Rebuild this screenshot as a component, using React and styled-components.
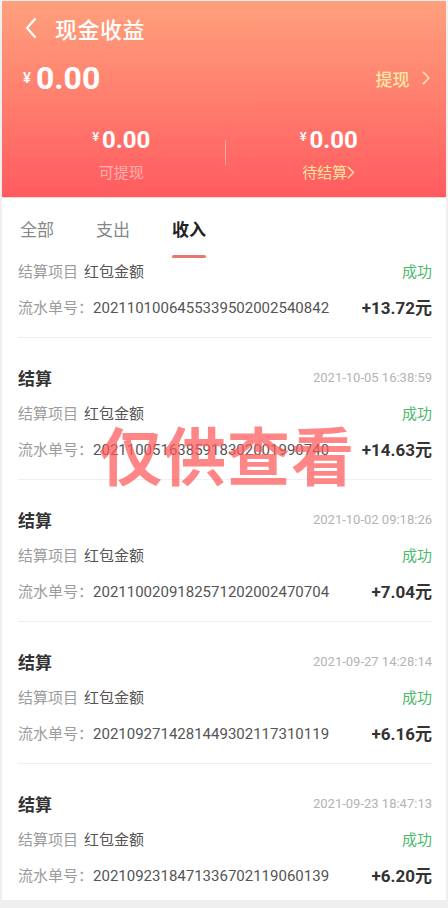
import React from "react";
import styled, { createGlobalStyle } from "styled-components";

const GlobalStyle = createGlobalStyle`
  html, body {
    margin: 0;
    padding: 0;
    background: #efefef;
  }
  * { box-sizing: border-box; }
`;

const NUM = `Roboto, "Noto Sans CJK SC", sans-serif`;
const CJK = `"Noto Sans CJK SC", "Noto Sans", sans-serif`;

const records = [
  { date: "2021-10-10 06:45:53", serial: "2021101006455339502002540842", amount: "+13.72" },
  { date: "2021-10-05 16:38:59", serial: "2021100516385918302001990740", amount: "+14.63" },
  { date: "2021-10-02 09:18:26", serial: "2021100209182571202002470704", amount: "+7.04" },
  { date: "2021-09-27 14:28:14", serial: "2021092714281449302117310119", amount: "+6.16" },
  { date: "2021-09-23 18:47:13", serial: "2021092318471336702119060139", amount: "+6.20" },
];

// the list is scrolled: only the lower part of the first record shows
const scrollTop = 8;

const Frame = styled.div`
  width: 448px;
  height: 908px;
  padding: 1px 2px 0 2px;
  background: #efefef;
  font-family: ${CJK};
`;

const Screen = styled.div`
  height: 899px;
  background: #fff;
  display: flex;
  flex-direction: column;
  overflow: hidden;
`;

const Header = styled.header`
  height: 197px;
  flex-shrink: 0;
  background: linear-gradient(180deg, #ffa07c 0%, #ff7e6e 50%, #ff5b60 100%);
  color: #fff;
  display: flex;
  flex-direction: column;
  border-bottom: 1px solid #f3d6d6;
`;

const TopBar = styled.div`
  height: 54px;
  display: flex;
  align-items: center;
  padding-left: 22px;
`;

const Title = styled.h1`
  margin: 0 0 0 17px;
  font-size: 22px;
  font-weight: 500;
  line-height: 1;
  letter-spacing: 0.5px;
`;

const BalanceRow = styled.div`
  height: 46px;
  display: flex;
  align-items: center;
  justify-content: space-between;
  padding: 0 16px 0 21px;
`;

const Money = styled.div`
  display: flex;
  align-items: baseline;
  font-family: ${NUM};
  font-weight: 700;
  line-height: 1;
`;

const Yen = styled.span`
  font-size: ${(p) => p.size}px;
  font-weight: 500;
  margin-right: ${(p) => p.gap}px;
  position: relative;
  top: ${(p) => -p.lift}px;
`;

const Digits = styled.span`
  font-size: ${(p) => p.size}px;
`;

const Withdraw = styled.div`
  display: flex;
  align-items: center;
  gap: 12px;
  color: #ffe8a6;
  font-size: 17px;
  font-weight: 500;
`;

const SubRow = styled.div`
  margin-top: 22px;
  display: flex;
  padding: 0 14px 0 16px;
`;

const SubCol = styled.div`
  flex: 1;
  display: flex;
  flex-direction: column;
  align-items: center;
`;

const SubAmount = styled(Money)`
  height: 34px;
  align-items: center;
`;

const SubLabel = styled.div`
  margin-top: 5px;
  height: 20px;
  line-height: 20px;
  font-size: 15px;
  color: ${(p) => (p.gold ? "#ffe3a0" : "rgba(255,255,255,0.5)")};
  display: flex;
  align-items: center;
`;

const VLine = styled.div`
  width: 1px;
  height: 25px;
  margin-top: 17px;
  background: rgba(255, 255, 255, 0.4);
`;

const Tabs = styled.nav`
  height: 62px;
  flex-shrink: 0;
  display: flex;
  gap: 42px;
  padding-left: 18px;
  background: #fff;
`;

const Tab = styled.div`
  position: relative;
  padding-top: 21px;
  font-size: 17px;
  line-height: 20px;
  color: ${(p) => (p.active ? "#222" : "#888")};
  font-weight: ${(p) => (p.active ? 700 : 400)};

  &::after {
    content: "";
    display: ${(p) => (p.active ? "block" : "none")};
    position: absolute;
    left: 0;
    right: 0;
    bottom: 2px;
    height: 3px;
    border-radius: 2px;
    background: #e9776d;
  }
`;

const Viewport = styled.div`
  flex: 1;
  overflow: hidden;
  position: relative;
`;

const List = styled.div`
  padding: 0 14px 0 16px;
`;

const Item = styled.div`
  padding: ${(p) => (p.partial ? "0" : "22px")} 0 13px;
  border-bottom: 1px solid #efefef;
`;

const Line = styled.div`
  height: ${(p) => p.h}px;
  display: flex;
  align-items: center;
  justify-content: space-between;
`;

const ItemTitle = styled.div`
  font-size: 17px;
  font-weight: 700;
  color: #333;
`;

const DateText = styled.div`
  font-family: ${NUM};
  font-size: 13px;
  color: #b3b3b3;
`;

const Label = styled.span`
  font-size: 15px;
  color: #9c9c9c;
`;

const Value = styled.span`
  font-size: 15px;
  color: #555;
  margin-left: 6px;
`;

const Serial = styled.span`
  font-family: ${NUM};
  font-size: 15px;
  color: #555;
`;

const Status = styled.span`
  font-size: 15px;
  color: #4cb96b;
`;

const Amount = styled.span`
  font-family: ${NUM};
  font-size: 17px;
  font-weight: 700;
  color: #333;
`;

const Watermark = styled.div`
  position: absolute;
  left: 0;
  right: 0;
  top: 161px;
  padding-left: 6px;
  text-align: center;
  font-size: 63px;
  font-weight: 700;
  line-height: 1;
  letter-spacing: 1px;
  color: rgba(255, 88, 88, 0.72);
  pointer-events: none;
`;

const BackIcon = () => (
  <svg width="14" height="22" viewBox="0 0 14 22" fill="none">
    <path d="M11 2 L3 11 L11 20" stroke="#fff" strokeWidth="2.2" strokeLinecap="round" strokeLinejoin="round" />
  </svg>
);

const Chevron = ({ color, size = 10 }) => (
  <svg width={size * 0.6} height={size} viewBox="0 0 6 10" fill="none">
    <path d="M1 1 L5 5 L1 9" stroke={color} strokeWidth="1.2" strokeLinecap="round" strokeLinejoin="round" />
  </svg>
);

const Record = ({ r, partial }) => (
  <Item partial={partial}>
    {!partial && (
      <Line h={34}>
        <ItemTitle>结算</ItemTitle>
        <DateText>{r.date}</DateText>
      </Line>
    )}
    <Line h={36}>
      <span>
        <Label>结算项目</Label>
        <Value>红包金额</Value>
      </span>
      <Status>成功</Status>
    </Line>
    <Line h={36}>
      <span>
        <Label>流水单号：</Label>
        <Serial>{r.serial}</Serial>
      </span>
      <Amount>{r.amount}元</Amount>
    </Line>
  </Item>
);

export default function App() {
  return (
    <>
      <GlobalStyle />
      <Frame>
        <Screen>
          <Header>
            <TopBar>
              <BackIcon />
              <Title>现金收益</Title>
            </TopBar>
            <BalanceRow>
              <Money>
                <Yen size={15} lift={6} gap={5}>¥</Yen>
                <Digits size={32}>0.00</Digits>
              </Money>
              <Withdraw>
                提现
                <Chevron color="#ffe8a6" size={14} />
              </Withdraw>
            </BalanceRow>
            <SubRow>
              <SubCol>
                <SubAmount>
                  <Yen size={13} lift={4} gap={3}>¥</Yen>
                  <Digits size={24}>0.00</Digits>
                </SubAmount>
                <SubLabel>可提现</SubLabel>
              </SubCol>
              <VLine />
              <SubCol>
                <SubAmount>
                  <Yen size={13} lift={4} gap={3}>¥</Yen>
                  <Digits size={24}>0.00</Digits>
                </SubAmount>
                <SubLabel gold>
                  待结算
                  <Chevron color="#ffe3a0" size={13} />
                </SubLabel>
              </SubCol>
            </SubRow>
          </Header>

          <Tabs>
            <Tab>全部</Tab>
            <Tab>支出</Tab>
            <Tab active>收入</Tab>
          </Tabs>

          <Viewport>
            <List style={{ marginTop: -scrollTop }}>
              {records.map((r, i) => (
                <Record key={r.serial} r={r} partial={i === 0} />
              ))}
            </List>
            <Watermark>仅供查看</Watermark>
          </Viewport>
        </Screen>
      </Frame>
    </>
  );
}
